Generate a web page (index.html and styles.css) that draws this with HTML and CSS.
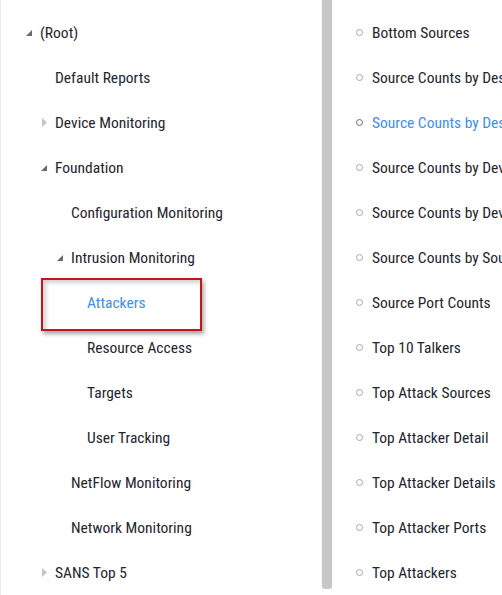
FILE: index.html
```html
<!DOCTYPE html>
<html>
<head>
<meta charset="utf-8">
<link rel="stylesheet" href="styles.css">
</head>
<body>
<div class="frame">
  <div class="tree">
    <div class="row l0"><span class="tw open"><svg viewBox="0 0 6 6" width="6" height="6"><polygon points="6,0 6,6 0,6" fill="#6a6a6a"/></svg></span><span class="label">(Root)</span></div>
    <div class="row l1"><span class="tw"></span><span class="label">Default Reports</span></div>
    <div class="row l1"><span class="tw closed"><svg viewBox="0 0 5 9" width="5" height="9"><polygon points="0,0 5,4.5 0,9" fill="#c4c4c4"/></svg></span><span class="label">Device Monitoring</span></div>
    <div class="row l1"><span class="tw open"><svg viewBox="0 0 6 6" width="6" height="6"><polygon points="6,0 6,6 0,6" fill="#6a6a6a"/></svg></span><span class="label">Foundation</span></div>
    <div class="row l2"><span class="tw"></span><span class="label">Configuration Monitoring</span></div>
    <div class="row l2"><span class="tw open"><svg viewBox="0 0 6 6" width="6" height="6"><polygon points="6,0 6,6 0,6" fill="#6a6a6a"/></svg></span><span class="label">Intrusion Monitoring</span></div>
    <div class="row l3 selected"><span class="tw"></span><span class="label">Attackers</span><span class="callout"></span></div>
    <div class="row l3"><span class="tw"></span><span class="label">Resource Access</span></div>
    <div class="row l3"><span class="tw"></span><span class="label">Targets</span></div>
    <div class="row l3"><span class="tw"></span><span class="label">User Tracking</span></div>
    <div class="row l2"><span class="tw"></span><span class="label">NetFlow Monitoring</span></div>
    <div class="row l2"><span class="tw"></span><span class="label">Network Monitoring</span></div>
    <div class="row l1"><span class="tw closed"><svg viewBox="0 0 5 9" width="5" height="9"><polygon points="0,0 5,4.5 0,9" fill="#c4c4c4"/></svg></span><span class="label">SANS Top 5</span></div>
  </div>
  <div class="scrollbar"><div class="thumb"></div></div>
  <div class="list">
    <div class="item"><span class="dot"></span><span class="text">Bottom Sources</span></div>
    <div class="item"><span class="dot"></span><span class="text">Source Counts by Des</span></div>
    <div class="item active"><span class="dot"></span><span class="text">Source Counts by Des</span></div>
    <div class="item"><span class="dot"></span><span class="text">Source Counts by Dev</span></div>
    <div class="item"><span class="dot"></span><span class="text">Source Counts by Dev</span></div>
    <div class="item"><span class="dot"></span><span class="text">Source Counts by Sou</span></div>
    <div class="item"><span class="dot"></span><span class="text">Source Port Counts</span></div>
    <div class="item"><span class="dot"></span><span class="text">Top 10 Talkers</span></div>
    <div class="item"><span class="dot"></span><span class="text">Top Attack Sources</span></div>
    <div class="item"><span class="dot"></span><span class="text">Top Attacker Detail</span></div>
    <div class="item"><span class="dot"></span><span class="text">Top Attacker Details</span></div>
    <div class="item"><span class="dot"></span><span class="text">Top Attacker Ports</span></div>
    <div class="item"><span class="dot"></span><span class="text">Top Attackers</span></div>
  </div>
</div>
</body>
</html>
```

FILE: styles.css
```css
html, body {
  margin: 0;
  padding: 0;
  background: #ffffff;
}

body {
  width: 502px;
  height: 595px;
  overflow: hidden;
  font-family: "Liberation Sans Narrow", "Roboto Condensed", "DejaVu Sans Condensed", sans-serif;
  font-size: 15.5px;
  color: #24242e;
}

.frame {
  display: flex;
  height: 595px;
}

.tree {
  width: 321px;
  border-left: 1px solid #ececec;
  padding-top: 10px;
  box-sizing: border-box;
  flex: none;
}

.row {
  position: relative;
  height: 45px;
  display: flex;
  align-items: center;
  white-space: nowrap;
}

.row.l0 { padding-left: 25px; }
.row.l1 { padding-left: 40px; }
.row.l2 { padding-left: 56px; }
.row.l3 { padding-left: 72px; }

.tw {
  width: 14px;
  flex: none;
  display: flex;
  align-items: center;
}

.tw.open svg { margin-top: 1px; }
.tw.closed svg { margin-left: 1px; }

.row.selected .label {
  color: #3d8ef0;
}

.callout {
  position: absolute;
  left: 40px;
  top: -2px;
  width: 157px;
  height: 49px;
  border: 2px solid #c4141c;
  box-shadow: 2px 3px 4px rgba(0, 0, 0, 0.35), inset 3px 3px 4px rgba(0, 0, 0, 0.18);
}

.scrollbar {
  width: 12px;
  flex: none;
  height: 589px;
  background: #fbfbfb;
}

.thumb {
  width: 10px;
  height: 589px;
  margin-left: 1px;
  background: #c7c7c7;
  border-radius: 0 0 3px 3px;
}

.list {
  flex: 1;
  min-width: 0;
  overflow: hidden;
  padding-top: 10px;
  padding-left: 23px;
}

.item {
  height: 45px;
  display: flex;
  align-items: center;
  white-space: nowrap;
}

.dot {
  width: 5px;
  height: 5px;
  border: 1px solid #a8a8a8;
  border-radius: 50%;
  flex: none;
  margin-right: 9px;
}

.item.active .dot {
  border-color: #6a6a6a;
}

.item.active .text {
  color: #3d8ef0;
}
```
